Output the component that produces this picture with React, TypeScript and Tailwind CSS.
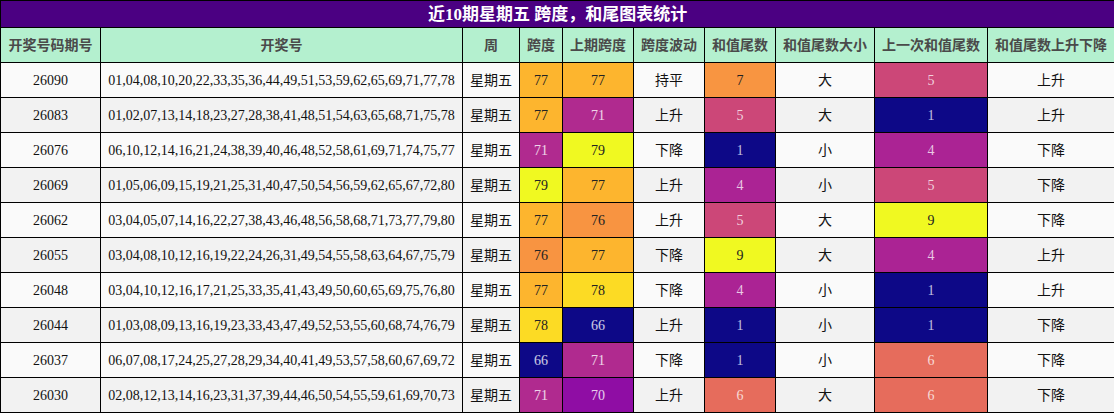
type Row = {
  issue: string;
  nums: string;
  span: number;
  prevSpan: number;
  wave: string;
  tail: number;
  size: string;
  prevTail: number;
  trend: string;
};

const rows: Row[] = [
  { issue: '26090', nums: '01,04,08,10,20,22,33,35,36,44,49,51,53,59,62,65,69,71,77,78', span: 77, prevSpan: 77, wave: '持平', tail: 7, size: '大', prevTail: 5, trend: '上升' },
  { issue: '26083', nums: '01,02,07,13,14,18,23,27,28,38,41,48,51,54,63,65,68,71,75,78', span: 77, prevSpan: 71, wave: '上升', tail: 5, size: '大', prevTail: 1, trend: '上升' },
  { issue: '26076', nums: '06,10,12,14,16,21,24,38,39,40,46,48,52,58,61,69,71,74,75,77', span: 71, prevSpan: 79, wave: '下降', tail: 1, size: '小', prevTail: 4, trend: '下降' },
  { issue: '26069', nums: '01,05,06,09,15,19,21,25,31,40,47,50,54,56,59,62,65,67,72,80', span: 79, prevSpan: 77, wave: '上升', tail: 4, size: '小', prevTail: 5, trend: '下降' },
  { issue: '26062', nums: '03,04,05,07,14,16,22,27,38,43,46,48,56,58,68,71,73,77,79,80', span: 77, prevSpan: 76, wave: '上升', tail: 5, size: '大', prevTail: 9, trend: '下降' },
  { issue: '26055', nums: '03,04,08,10,12,16,19,22,24,26,31,49,54,55,58,63,64,67,75,79', span: 76, prevSpan: 77, wave: '下降', tail: 9, size: '大', prevTail: 4, trend: '上升' },
  { issue: '26048', nums: '03,04,10,12,16,17,21,25,33,35,41,43,49,50,60,65,69,75,76,80', span: 77, prevSpan: 78, wave: '下降', tail: 4, size: '小', prevTail: 1, trend: '上升' },
  { issue: '26044', nums: '01,03,08,09,13,16,19,23,33,43,47,49,52,53,55,60,68,74,76,79', span: 78, prevSpan: 66, wave: '上升', tail: 1, size: '小', prevTail: 1, trend: '下降' },
  { issue: '26037', nums: '06,07,08,17,24,25,27,28,29,34,40,41,49,53,57,58,60,67,69,72', span: 66, prevSpan: 71, wave: '下降', tail: 1, size: '小', prevTail: 6, trend: '下降' },
  { issue: '26030', nums: '02,08,12,13,14,16,23,31,37,39,44,46,50,54,55,59,61,69,70,73', span: 71, prevSpan: 70, wave: '上升', tail: 6, size: '大', prevTail: 6, trend: '下降' },
];

// plasma-style colour classes, picked from the chart
const spanCls: Record<number, string> = {
  66: 'bg-[#0d0887] text-white/80',
  70: 'bg-[#8f0da4] text-white/80',
  71: 'bg-[#b02a8f] text-white/80',
  76: 'bg-[#f89441] text-[#222]',
  77: 'bg-[#fdb52e] text-[#222]',
  78: 'bg-[#fcdb24] text-[#222]',
  79: 'bg-[#f0f921] text-[#222]',
};

const tailCls: Record<number, string> = {
  1: 'bg-[#0d0887] text-white/75',
  4: 'bg-[#ab2394] text-white/75',
  5: 'bg-[#cc4778] text-white/75',
  6: 'bg-[#e66c5c] text-white/75',
  7: 'bg-[#f89541] text-[#222]',
  9: 'bg-[#f0f921] text-[#222]',
};

const headers = ['开奖号码期号', '开奖号', '周', '跨度', '上期跨度', '跨度波动', '和值尾数', '和值尾数大小', '上一次和值尾数', '和值尾数上升下降'];
const widths = ['w-[100px]', 'w-[362px]', 'w-[57px]', 'w-[43px]', 'w-[71px]', 'w-[71px]', 'w-[71px]', 'w-[99px]', 'w-[113px]', 'w-[127px]'];

export default function App() {
  return (
    <div className="w-[1114px] h-[413px] bg-white overflow-hidden font-['Liberation_Serif','Noto_Sans_CJK_SC',serif]">
      <table className="w-[1114px] table-fixed border-collapse border border-black text-[14px] text-[#111]">
        <colgroup>
          {widths.map((w, i) => (
            <col key={i} className={w} />
          ))}
        </colgroup>
        <thead>
          <tr className="h-[27px]">
            <th colSpan={10} className="border border-black bg-[#4b0082] text-white text-[17px] font-bold leading-none p-0">
              近10期星期五 跨度，和尾图表统计
            </th>
          </tr>
          <tr className="h-[35px]">
            {headers.map((h) => (
              <th key={h} className="border border-black bg-[#b4f0cf] text-[#4a4a4a] font-bold p-0 whitespace-nowrap">
                {h}
              </th>
            ))}
          </tr>
        </thead>
        <tbody>
          {rows.map((r, i) => (
            <tr key={r.issue} className={`h-[35px] text-center ${i % 2 === 0 ? 'bg-[#fafafa]' : 'bg-[#f2f2f2]'}`}>
              <td className="border border-black p-0">{r.issue}</td>
              <td className="border border-black p-0 whitespace-nowrap">{r.nums}</td>
              <td className="border border-black p-0">星期五</td>
              <td className={`border border-black p-0 ${spanCls[r.span]}`}>{r.span}</td>
              <td className={`border border-black p-0 ${spanCls[r.prevSpan]}`}>{r.prevSpan}</td>
              <td className="border border-black p-0">{r.wave}</td>
              <td className={`border border-black p-0 ${tailCls[r.tail]}`}>{r.tail}</td>
              <td className="border border-black p-0">{r.size}</td>
              <td className={`border border-black p-0 ${tailCls[r.prevTail]}`}>{r.prevTail}</td>
              <td className="border border-black p-0">{r.trend}</td>
            </tr>
          ))}
        </tbody>
      </table>
    </div>
  );
}
